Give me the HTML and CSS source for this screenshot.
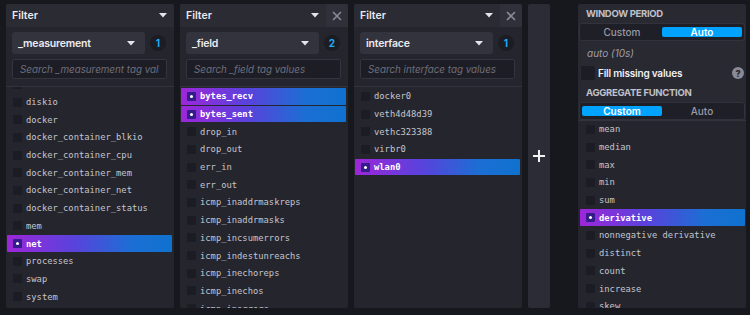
FILE: index.html
```html
<!DOCTYPE html>
<html>
<head>
<meta charset="utf-8">
<link rel="stylesheet" href="styles.css">
</head>
<body>
<div class="builder">
  <section class="panel">
    <header class="panel-head">
      <span class="panel-title">Filter</span>
      <span class="icon-btn"><svg width="8" height="5" viewBox="0 0 8 5"><path d="M0 0H8L4 4.6Z" fill="#e4e4ea"/></svg></span>
    </header>
    <div class="controls">
      <div class="control-row">
        <div class="select"><span>_measurement</span><svg width="8" height="5" viewBox="0 0 8 5"><path d="M0 0H8L4 4.6Z" fill="#e4e4ea"/></svg></div>
        <span class="badge">1</span>
      </div>
      <input class="search" placeholder="Search _measurement tag values">
    </div>
    <div class="list-wrap">
      <ul class="list scroll-12">
        <li class="item"><span class="box"></span>disk</li>
        <li class="item"><span class="box"></span>diskio</li>
        <li class="item"><span class="box"></span>docker</li>
        <li class="item"><span class="box"></span>docker_container_blkio</li>
        <li class="item"><span class="box"></span>docker_container_cpu</li>
        <li class="item"><span class="box"></span>docker_container_mem</li>
        <li class="item"><span class="box"></span>docker_container_net</li>
        <li class="item"><span class="box"></span>docker_container_status</li>
        <li class="item"><span class="box"></span>mem</li>
        <li class="item on"><span class="box"></span>net</li>
        <li class="item"><span class="box"></span>processes</li>
        <li class="item"><span class="box"></span>swap</li>
        <li class="item"><span class="box"></span>system</li>
      </ul>
    </div>
  </section>

  <section class="panel">
    <header class="panel-head">
      <span class="panel-title">Filter</span>
      <span class="icon-btn"><svg width="8" height="5" viewBox="0 0 8 5"><path d="M0 0H8L4 4.6Z" fill="#e4e4ea"/></svg></span>
      <span class="icon-btn close"><svg width="10" height="10" viewBox="0 0 10 10"><path d="M1 1L9 9M9 1L1 9" stroke="#8a8a95" stroke-width="1.6"/></svg></span>
    </header>
    <div class="controls">
      <div class="control-row">
        <div class="select"><span>_field</span><svg width="8" height="5" viewBox="0 0 8 5"><path d="M0 0H8L4 4.6Z" fill="#e4e4ea"/></svg></div>
        <span class="badge">2</span>
      </div>
      <input class="search" placeholder="Search _field tag values">
    </div>
    <div class="list-wrap">
      <ul class="list">
        <li class="item on"><span class="box"></span>bytes_recv</li>
        <li class="item on"><span class="box"></span>bytes_sent</li>
        <li class="item"><span class="box"></span>drop_in</li>
        <li class="item"><span class="box"></span>drop_out</li>
        <li class="item"><span class="box"></span>err_in</li>
        <li class="item"><span class="box"></span>err_out</li>
        <li class="item"><span class="box"></span>icmp_inaddrmaskreps</li>
        <li class="item"><span class="box"></span>icmp_inaddrmasks</li>
        <li class="item"><span class="box"></span>icmp_incsumerrors</li>
        <li class="item"><span class="box"></span>icmp_indestunreachs</li>
        <li class="item"><span class="box"></span>icmp_inechoreps</li>
        <li class="item"><span class="box"></span>icmp_inechos</li>
        <li class="item"><span class="box"></span>icmp_inerrors</li>
      </ul>
    </div>
  </section>

  <section class="panel">
    <header class="panel-head">
      <span class="panel-title">Filter</span>
      <span class="icon-btn"><svg width="8" height="5" viewBox="0 0 8 5"><path d="M0 0H8L4 4.6Z" fill="#e4e4ea"/></svg></span>
      <span class="icon-btn close"><svg width="10" height="10" viewBox="0 0 10 10"><path d="M1 1L9 9M9 1L1 9" stroke="#8a8a95" stroke-width="1.6"/></svg></span>
    </header>
    <div class="controls">
      <div class="control-row">
        <div class="select"><span>interface</span><svg width="8" height="5" viewBox="0 0 8 5"><path d="M0 0H8L4 4.6Z" fill="#e4e4ea"/></svg></div>
        <span class="badge">1</span>
      </div>
      <input class="search" placeholder="Search interface tag values">
    </div>
    <div class="list-wrap">
      <ul class="list">
        <li class="item"><span class="box"></span>docker0</li>
        <li class="item"><span class="box"></span>veth4d48d39</li>
        <li class="item"><span class="box"></span>vethc323388</li>
        <li class="item"><span class="box"></span>virbr0</li>
        <li class="item on"><span class="box"></span>wlan0</li>
      </ul>
    </div>
  </section>

  <div class="add-col">
    <svg width="12" height="12" viewBox="0 0 12 12"><path d="M6 0V12M0 6H12" stroke="#f2f2f5" stroke-width="2"/></svg>
  </div>

  <aside class="fn-panel">
    <div class="fn-title">Window Period</div>
    <div class="toggle"><span>Custom</span><span class="active">Auto</span></div>
    <div class="auto-row">auto (10s)</div>
    <div class="fill-row">
      <span class="fill-box"></span>
      <span class="fill-label">Fill missing values</span>
      <span class="help">?</span>
    </div>
    <div class="fn-title second">Aggregate Function</div>
    <div class="toggle"><span class="active">Custom</span><span>Auto</span></div>
    <div class="list-wrap fn-list">
      <ul class="list">
        <li class="item"><span class="box"></span>mean</li>
        <li class="item"><span class="box"></span>median</li>
        <li class="item"><span class="box"></span>max</li>
        <li class="item"><span class="box"></span>min</li>
        <li class="item"><span class="box"></span>sum</li>
        <li class="item on"><span class="box"></span>derivative</li>
        <li class="item"><span class="box"></span>nonnegative derivative</li>
        <li class="item"><span class="box"></span>distinct</li>
        <li class="item"><span class="box"></span>count</li>
        <li class="item"><span class="box"></span>increase</li>
        <li class="item"><span class="box"></span>skew</li>
        <li class="item"><span class="box"></span>spread</li>
      </ul>
    </div>
  </aside>
</div>
</body>
</html>
```

FILE: styles.css
```css
* { box-sizing: border-box; margin: 0; padding: 0; }
html, body { width: 750px; height: 315px; overflow: hidden; }
body {
  background: #17171e;
  font-family: Inter, "Noto Sans", sans-serif;
  color: #e6e6eb;
}
.builder {
  display: flex;
  align-items: flex-start;
  padding: 4px 0 0 6px;
  height: 315px;
}
.panel {
  width: 168px;
  height: 304px;
  margin-right: 6px;
  background: #25252d;
  border-radius: 2px;
  display: flex;
  flex-direction: column;
  overflow: hidden;
  flex: none;
}
.panel-head {
  height: 23px;
  background: #2b2b34;
  display: flex;
  align-items: center;
  flex: none;
}
.panel-title {
  flex: 1;
  padding-left: 6px;
  font-size: 10.5px;
  font-weight: 600;
  color: #e9e9ee;
}
.icon-btn {
  width: 22px;
  height: 23px;
  display: flex;
  align-items: center;
  justify-content: center;
}
.icon-btn.close { background: #30303a; }
.controls {
  padding: 5px 6px 7px;
  border-bottom: 1px solid #33333d;
  display: flex;
  flex-direction: column;
  gap: 5px;
  flex: none;
}
.control-row { display: flex; align-items: center; }
.select {
  width: 133px;
  height: 22px;
  background: #33333d;
  border-radius: 3px;
  display: flex;
  align-items: center;
  justify-content: space-between;
  padding: 0 10px 0 6px;
  font-size: 10.5px;
  font-weight: 600;
  letter-spacing: -0.2px;
  color: #ececf0;
}
.badge {
  margin-left: 5px;
  width: 16px;
  height: 16px;
  border-radius: 50%;
  background: #1c1c23;
  color: #1fa9f5;
  font-size: 10px;
  font-weight: 700;
  display: flex;
  align-items: center;
  justify-content: center;
}
.search {
  width: 155px;
  height: 20px;
  background: #1d1d25;
  border: 1px solid #34343e;
  border-radius: 2px;
  padding: 0 7px;
  font-family: Inter, "Noto Sans", sans-serif;
  font-style: italic;
  font-size: 9.8px;
  color: #e6e6eb;
  outline: none;
}
.search::placeholder { color: #6e6e7a; }
.list-wrap {
  flex: 1;
  overflow: hidden;
  padding: 1px 2px 0 1px;
}
.list { list-style: none; }
.scroll-12 { margin-top: -12px; }
.item {
  height: 16.7px;
  margin-bottom: 1px;
  display: flex;
  align-items: center;
  padding-left: 6px;
  font-family: "DejaVu Sans Mono", monospace;
  font-size: 8.8px;
  color: #c4c5ce;
  white-space: nowrap;
  border-radius: 1px;
}
.item .box {
  width: 9px;
  height: 9px;
  background: #1c1c24;
  border-radius: 1px;
  margin-right: 4px;
  flex: none;
  display: flex;
  align-items: center;
  justify-content: center;
}
.item.on {
  background: linear-gradient(90deg, #9d27d9 0%, #5a42dc 40%, #1c6ed4 75%, #0f72cf 100%);
  color: #ffffff;
  font-weight: bold;
}
.item.on .box { background: #341c8a; }
.item.on .box::after {
  content: "";
  width: 3px;
  height: 3px;
  border-radius: 50%;
  background: #ffffff;
}
.add-col {
  width: 22px;
  height: 304px;
  background: #2c2c36;
  border-radius: 2px;
  display: flex;
  align-items: center;
  justify-content: center;
  margin-right: 28px;
  flex: none;
}
.fn-panel {
  width: 168px;
  height: 304px;
  background: #292931;
  border-radius: 2px;
  display: flex;
  flex-direction: column;
  overflow: hidden;
  flex: none;
}
.fn-title {
  height: 19px;
  padding-left: 8px;
  display: flex;
  align-items: center;
  font-size: 9.5px;
  font-weight: 700;
  letter-spacing: -0.3px;
  color: #c0c0c9;
  text-transform: uppercase;
  flex: none;
}
.fn-title.second { height: 20px; }
.toggle {
  margin: 0 1px;
  height: 18px;
  background: #1f1f27;
  border: 1px solid #32323c;
  border-radius: 3px;
  display: flex;
  padding: 3px 2px;
  flex: none;
}
.toggle span {
  flex: 1;
  display: flex;
  align-items: center;
  justify-content: center;
  font-size: 10px;
  font-weight: 500;
  color: #9a9aa6;
  border-radius: 2px;
}
.toggle .active {
  background: #00a3ff;
  color: #ffffff;
  font-weight: 600;
}
.auto-row {
  height: 23px;
  display: flex;
  align-items: center;
  padding-left: 9px;
  font-style: italic;
  font-size: 10px;
  color: #9d9da8;
  flex: none;
}
.fill-row {
  height: 18px;
  display: flex;
  align-items: center;
  padding: 0 2px 0 3px;
  flex: none;
}
.fill-box {
  width: 14px;
  height: 14px;
  background: #1d1d25;
  border-radius: 2px;
  margin-right: 3px;
}
.fill-label {
  flex: 1;
  font-size: 10px;
  font-weight: 600;
  letter-spacing: -0.2px;
  color: #f0f0f4;
}
.help {
  width: 12px;
  height: 12px;
  border-radius: 50%;
  background: #8a8a96;
  color: #25252d;
  font-size: 9px;
  font-weight: 800;
  display: flex;
  align-items: center;
  justify-content: center;
}
.fn-list {
  background: #25252d;
  border-top: 1px solid #33333d;
  padding: 0 1px 0 2px;
}
```
